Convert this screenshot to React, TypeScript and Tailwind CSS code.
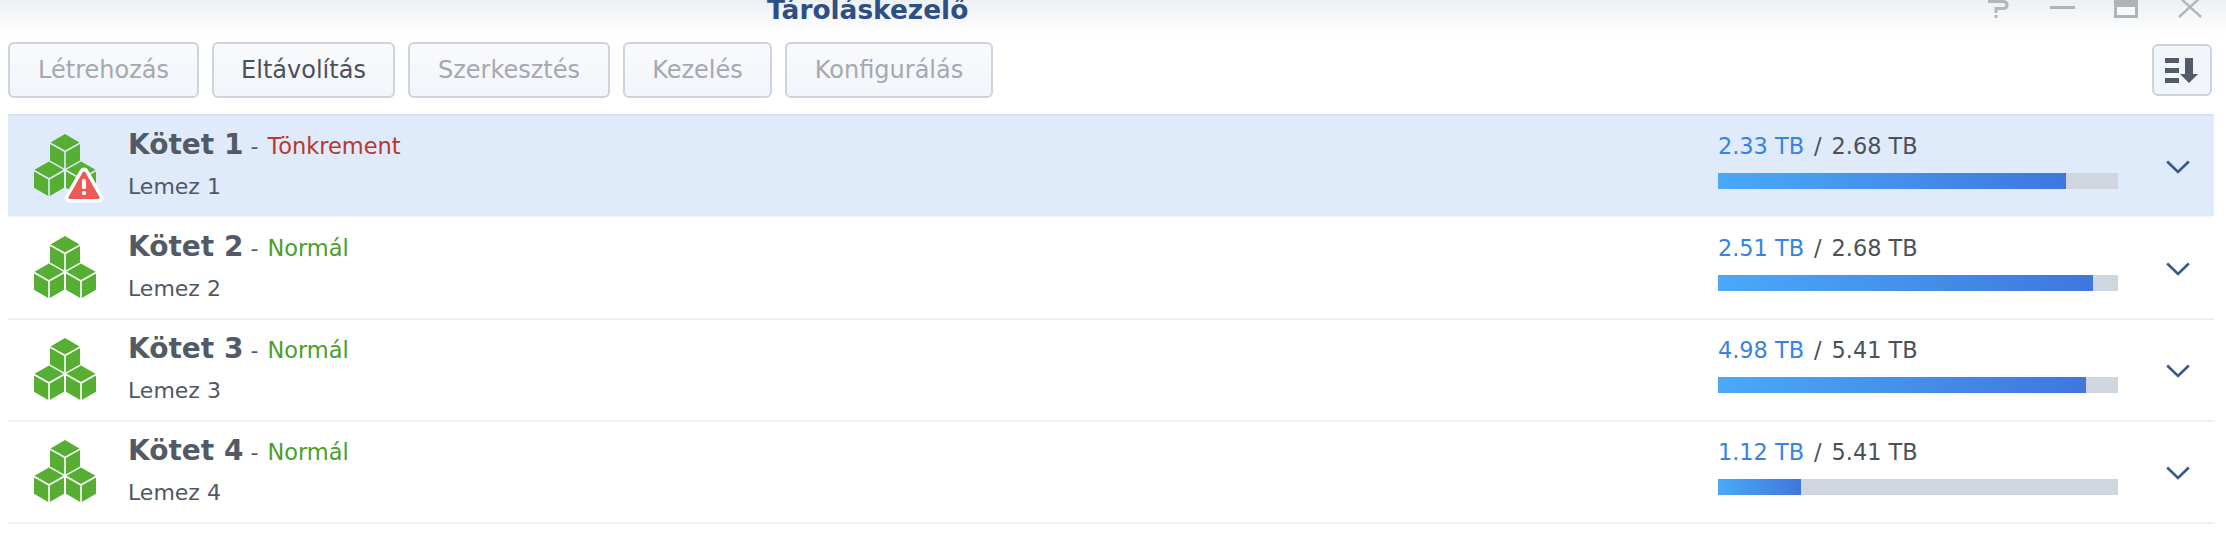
const font = { fontFamily: '"DejaVu Sans", sans-serif' };

function Cubes({ warn }: { warn?: boolean }) {
  const cube = (x: number, y: number) => (
    <g transform={`translate(${x} ${y})`} fill="#56ae33">
      <polygon points="15,0 29.5,8.4 15,16.6 0.5,8.4" />
      <polygon points="0,10 14.2,18 14.2,34.6 0,26.4" />
      <polygon points="30,10 15.8,18 15.8,34.6 30,26.4" />
    </g>
  );
  return (
    <svg width="72" height="72" viewBox="0 0 72 72" className="block shrink-0">
      {cube(16, 0)}
      {cube(0, 27.4)}
      {cube(32, 27.4)}
      {warn && (
        <g>
          <path d="M50 38 L65 64 H35 Z" fill="#ffffff" stroke="#ffffff" strokeWidth="9" strokeLinejoin="round" />
          <path d="M50 39 L64 63.5 H36 Z" fill="#ec5a55" stroke="#ec5a55" strokeWidth="3" strokeLinejoin="round" />
          <rect x="48" y="45" width="4" height="10" rx="1.5" fill="#ffffff" />
          <rect x="48" y="57" width="4" height="4" rx="1.5" fill="#ffffff" />
        </g>
      )}
    </svg>
  );
}

const buttons = [
  { label: "Létrehozás", w: "w-[191px]", active: false },
  { label: "Eltávolítás", w: "w-[183px]", active: true },
  { label: "Szerkesztés", w: "w-[202px]", active: false },
  { label: "Kezelés", w: "w-[149px]", active: false },
  { label: "Konfigurálás", w: "w-[208px]", active: false },
];

const rows = [
  { name: "Kötet 1", status: "Tönkrement", disk: "Lemez 1", used: "2.33 TB", total: "2.68 TB", fill: 348, selected: true },
  { name: "Kötet 2", status: "Normál", disk: "Lemez 2", used: "2.51 TB", total: "2.68 TB", fill: 375, selected: false },
  { name: "Kötet 3", status: "Normál", disk: "Lemez 3", used: "4.98 TB", total: "5.41 TB", fill: 368, selected: false },
  { name: "Kötet 4", status: "Normál", disk: "Lemez 4", used: "1.12 TB", total: "5.41 TB", fill: 83, selected: false },
];

export default function App() {
  return (
    <div className="w-[2226px] h-[552px] bg-white overflow-hidden flex flex-col" style={font}>
      <div className="h-[36px] shrink-0 bg-gradient-to-b from-[#edf0f3] to-white flex items-end overflow-hidden relative">
        <div className="ml-[767px] whitespace-nowrap font-bold text-[26.4px] leading-[32px] mb-[10px] text-[#2d4f86]">
          Tároláskezelő
        </div>
        <svg className="absolute left-[1985px] top-0" width="220" height="20" viewBox="0 0 220 20" fill="none">
          <path d="M3 1.5 H18 Q22 1.5 22 5 Q22 8.5 18 8.5 H11 V13" stroke="#b3b7bd" strokeWidth="3" />
          <rect x="9.5" y="15" width="3" height="3" fill="#b3b7bd" />
          <rect x="65" y="6" width="25" height="3" fill="#aeb3ba" />
          <rect x="129" y="0" width="24" height="18" fill="#aeb3ba" />
          <rect x="132" y="7" width="18" height="8" fill="#f8f9fa" />
          <path d="M194 -3 L216 17 M216 -3 L194 17" stroke="#b3b7bd" strokeWidth="2.4" />
        </svg>
      </div>

      <div className="flex items-center pl-[8px] pr-[14px] h-[78px] shrink-0">
        <div className="flex gap-[13px] mt-[-11px]">
          {buttons.map((b) => (
            <div
              key={b.label}
              className={`${b.w} h-[56px] flex items-center justify-center rounded-[6px] border-2 border-[#ccd4de] bg-gradient-to-b from-[#f9fafc] to-[#f2f5fa] text-[24px] ${b.active ? "text-[#4b5159]" : "text-[#a4a9b0]"}`}
            >
              {b.label}
            </div>
          ))}
        </div>
        <div className="ml-auto mt-[-10px] w-[60px] h-[52px] rounded-[6px] border-2 border-[#ccd4de] bg-[#f2f5fa] flex items-center justify-center">
          <svg width="34" height="26" viewBox="0 0 34 26">
            <rect x="0" y="1" width="14" height="5" fill="#525b66" />
            <rect x="0" y="11" width="14" height="5" fill="#525b66" />
            <rect x="0" y="21" width="14" height="5" fill="#525b66" />
            <path d="M20 1 H28 V17 H33 L24 26 L15 17 H20 Z" fill="#525b66" />
          </svg>
        </div>
      </div>

      <div className="ml-[8px] w-[2206px] border-t-2 border-[#d8e2ee]">
        {rows.map((r) => (
          <div
            key={r.name}
            className={`h-[102px] border-b-2 flex items-center ${r.selected ? "bg-[#dfeafa] border-[#f4f7fb]" : "bg-white border-[#eef0f4]"}`}
          >
            <div className="ml-[26px] mt-[8px]">
              <Cubes warn={r.selected} />
            </div>
            <div className="ml-[22px] flex flex-col mt-[-9px]">
              <div className="flex items-baseline h-[34px]">
                <span className="font-bold text-[28px] text-[#515a65]">{r.name}</span>
                <span className="text-[22px] text-[#515a65] ml-[7px]">-</span>
                <span className={`text-[22.5px] ml-[9px] ${r.selected ? "text-[#b5392c]" : "text-[#4a9e2a]"}`}>{r.status}</span>
              </div>
              <div className="text-[22px] text-[#4f5864] h-[30px] mt-[12px]">{r.disk}</div>
            </div>
            <div className="ml-auto w-[400px] flex flex-col mt-[-13px]">
              <div className="text-[22.4px] leading-[30px] text-[#4b5159] mb-[12px]">
                <span className="text-[#3584e4]">{r.used}</span>
                <span className="mx-[10px]">/</span>
                {r.total}
              </div>
              <div className="h-[16px] bg-[#cfd6df]">
                <div className="h-full bg-gradient-to-r from-[#4aa9f8] to-[#3f77dd]" style={{ width: r.fill }} />
              </div>
            </div>
            <div className="ml-[48px] mr-[24px] mt-[2px]">
              <svg width="24" height="14" viewBox="0 0 24 14" className="block" fill="none">
                <path d="M1.2 1.5 L12 12 L22.8 1.5" stroke="#35598c" strokeWidth="2.6" />
              </svg>
            </div>
          </div>
        ))}
      </div>
    </div>
  );
}
